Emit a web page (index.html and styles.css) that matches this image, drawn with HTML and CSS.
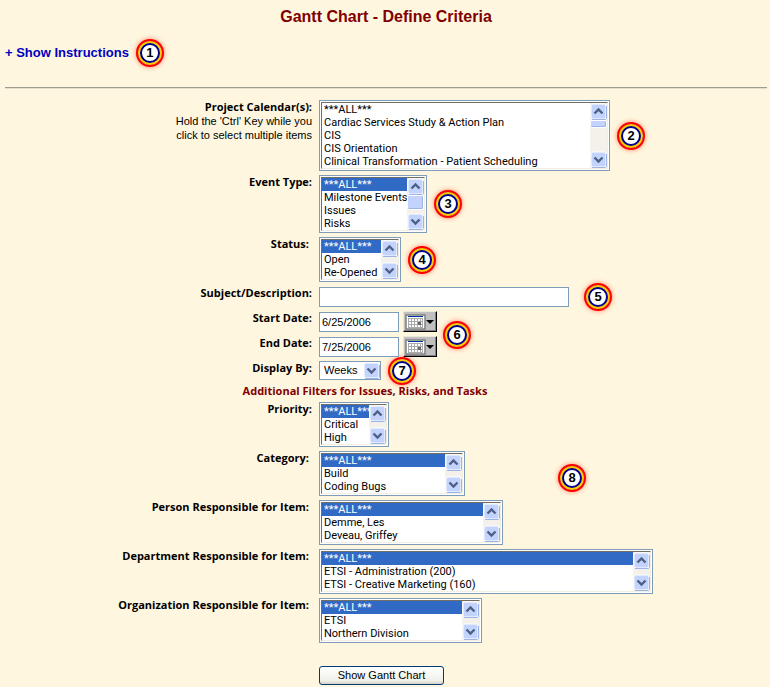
FILE: index.html
```html
<!DOCTYPE html>
<html lang="en">
  <head>
    <meta charset="utf-8">
    <title>Gantt Chart - Define Criteria</title>
    <link rel="stylesheet" href="styles.css">
  </head>
  <body>
    <svg class="defs" aria-hidden="true">
      <symbol id="up" viewBox="0 0 17 17">
        <rect x="1" y="1" width="15" height="15" rx="2" fill="#c3d3fd" stroke="#fff"/>
        <path d="M2 16.5h13.5l1-1V3" fill="none" stroke="#9db5e6"/>
        <path d="M4.500 10.500L8.500 6.500L12.500 10.500" fill="none" stroke="#4d6185" stroke-width="2.400"/>
      </symbol>
      <symbol id="down" viewBox="0 0 17 17">
        <rect x="1" y="1" width="15" height="15" rx="2" fill="#c3d3fd" stroke="#fff"/>
        <path d="M2 16.5h13.5l1-1V3" fill="none" stroke="#9db5e6"/>
        <path d="M4.500 6.500L8.500 10.500L12.500 6.500" fill="none" stroke="#4d6185" stroke-width="2.400"/>
      </symbol>
      <symbol id="calendar" viewBox="0 0 29 16">
        <rect x="1" y="1" width="19" height="14" fill="#fff" stroke="#808080" stroke-width="1.500"/>
        <path d="M3 2.500h15" stroke="#039"/>
        <path d="M3 4.500h15M3 7.500h15M3 10.500h15M3 13.500h15M3.500 4v10M6.500 4v10M9.500 4v10M12.500 4v10M15.500 4v10M17.500 4v10" stroke="#aaa" fill="none"/>
        <rect x="13" y="8" width="3" height="3" fill="#666"/>
        <path d="M21 6h8l-4 4z" fill="#000"/>
      </symbol>
    </svg>

    <h1>Gantt Chart - Define Criteria</h1>
    <div class="instructions">
      <a href="#instructions">+ Show Instructions</a>
      <span class="badge">1</span>
    </div>
    <hr>

    <form>
      <div class="row">
        <div class="label">
          <label for="calendars">Project Calendar(s):</label>
          <p>Hold the 'Ctrl' Key while you<br>click to select multiple items</p>
        </div>
        <div class="field">
          <div class="listbox calendars">
            <select id="calendars" multiple size="5">
              <option>***ALL***</option>
              <option>Cardiac Services Study &amp; Action Plan</option>
              <option>CIS</option>
              <option>CIS Orientation</option>
              <option>Clinical Transformation - Patient Scheduling</option>
            </select>
            <span class="scroll"><svg><use href="#up"/></svg><i class="thumb small"></i><svg><use href="#down"/></svg></span>
          </div>
          <span class="badge">2</span>
        </div>
      </div>

      <div class="row">
        <div class="label"><label for="type">Event Type:</label></div>
        <div class="field">
          <div class="listbox type">
            <select id="type" multiple size="4">
              <option selected>***ALL***</option>
              <option>Milestone Events</option>
              <option>Issues</option>
              <option>Risks</option>
            </select>
            <span class="scroll"><svg><use href="#up"/></svg><i class="thumb"></i><svg><use href="#down"/></svg></span>
          </div>
          <span class="badge">3</span>
        </div>
      </div>

      <div class="row">
        <div class="label"><label for="status">Status:</label>&nbsp;</div>
        <div class="field">
          <div class="listbox status">
            <select id="status" multiple size="3">
              <option selected>***ALL***</option>
              <option>Open</option>
              <option>Re-Opened</option>
            </select>
            <span class="scroll"><svg><use href="#up"/></svg><svg><use href="#down"/></svg></span>
          </div>
          <span class="badge">4</span>
        </div>
      </div>

      <div class="row line">
        <div class="label"><label for="subject">Subject/Description:</label></div>
        <div class="field wide">
          <input id="subject" class="subject" type="text">
          <span class="badge">5</span>
        </div>
      </div>

      <div class="dates">
        <div class="row line">
          <div class="label"><label for="start">Start Date:</label></div>
          <div class="field">
            <input id="start" class="date" type="text" value="6/25/2006">
            <button type="button" class="picker" aria-label="Pick start date"><svg><use href="#calendar"/></svg></button>
          </div>
        </div>
        <div class="row line">
          <div class="label"><label for="end">End Date:</label></div>
          <div class="field">
            <input id="end" class="date" type="text" value="7/25/2006">
            <button type="button" class="picker" aria-label="Pick end date"><svg><use href="#calendar"/></svg></button>
          </div>
        </div>
        <span class="badge">6</span>
      </div>

      <div class="row">
        <div class="label"><label for="display">Display By:</label></div>
        <div class="field">
          <div class="dropdown">
            <select id="display">
              <option>Weeks</option>
            </select>
            <svg><use href="#down"/></svg>
          </div>
          <span class="badge">7</span>
        </div>
      </div>

      <h2>Additional Filters for Issues, Risks, and Tasks</h2>

      <div class="filters">
        <div class="row">
          <div class="label"><label for="priority">Priority:</label></div>
          <div class="listbox priority">
            <select id="priority" multiple size="3">
              <option selected>***ALL***</option>
              <option>Critical</option>
              <option>High</option>
            </select>
            <span class="scroll"><svg><use href="#up"/></svg><svg><use href="#down"/></svg></span>
          </div>
        </div>
        <div class="row">
          <div class="label"><label for="category">Category:</label>&nbsp;</div>
          <div class="listbox category">
            <select id="category" multiple size="3">
              <option selected>***ALL***</option>
              <option>Build</option>
              <option>Coding Bugs</option>
            </select>
            <span class="scroll"><svg><use href="#up"/></svg><svg><use href="#down"/></svg></span>
          </div>
        </div>
        <div class="row">
          <div class="label"><label for="person">Person Responsible for Item:</label>&nbsp;</div>
          <div class="listbox person">
            <select id="person" multiple size="3">
              <option selected>***ALL***</option>
              <option>Demme, Les</option>
              <option>Deveau, Griffey</option>
            </select>
            <span class="scroll"><svg><use href="#up"/></svg><svg><use href="#down"/></svg></span>
          </div>
        </div>
        <div class="row">
          <div class="label"><label for="department">Department Responsible for Item:</label>&nbsp;</div>
          <div class="listbox department">
            <select id="department" multiple size="3">
              <option selected>***ALL***</option>
              <option>ETSI - Administration (200)</option>
              <option>ETSI - Creative Marketing (160)</option>
            </select>
            <span class="scroll"><svg><use href="#up"/></svg><svg><use href="#down"/></svg></span>
          </div>
        </div>
        <div class="row">
          <div class="label"><label for="organization">Organization Responsible for Item:</label>&nbsp;</div>
          <div class="listbox organization">
            <select id="organization" multiple size="3">
              <option selected>***ALL***</option>
              <option>ETSI</option>
              <option>Northern Division</option>
            </select>
            <span class="scroll"><svg><use href="#up"/></svg><svg><use href="#down"/></svg></span>
          </div>
        </div>
        <span class="badge">8</span>
      </div>

      <div class="row actions">
        <div></div>
        <div><button type="submit" class="submit">Show Gantt Chart</button></div>
      </div>
    </form>
  </body>
</html>
```

FILE: styles.css
```css
* {
  box-sizing: border-box;
}

body {
  margin: 8px 3px 0 5px;
  background-color: #fff6df;
  color: #000;
  font: 11px/14px "Liberation Sans", Arial, sans-serif;
}

.defs {
  display: none;
}

h1 {
  margin: 0;
  color: #800000;
  font-size: 16px;
  line-height: 18px;
  text-align: center;
}

.instructions {
  display: flex;
  align-items: center;
  gap: 7px;
  margin-top: 18px;
  font-size: 13px;
  line-height: 18px;
  font-weight: bold;
}

.instructions a {
  color: #0000c0;
  text-decoration: none;
}

hr {
  margin: 25px 0 11px;
  border: 0;
  border-top: 1px solid #9d9d90;
  border-bottom: 1px solid #e5dfcb;
}

form {
  max-width: 720px;
}

.row {
  display: grid;
  grid-template-columns: 307px 1fr;
  column-gap: 7px;
  margin-bottom: 4px;
}

.line {
  height: 21px;
}

.label {
  text-align: right;
}

label {
  font-family: "Open Sans", "Liberation Sans", sans-serif;
  font-weight: bold;
}

.label p {
  margin: 0;
}

.field {
  display: flex;
  align-items: center;
  gap: 7px;
}

.field.wide {
  gap: 15px;
}

select,
input,
button {
  margin: 0;
  font: 11px/13px "Liberation Sans", Arial, sans-serif;
  color: #000;
}

/* list boxes */
.listbox {
  position: relative;
  padding: 1px;
  background-color: #fff;
  border: 1px solid #7f9db9;
}

.listbox select {
  display: block;
  width: 100%;
  height: 100%;
  padding: 0;
  overflow: hidden;
  scrollbar-width: none;
  border: 1px solid;
  border-color: #716f64 #f1efe2 #f1efe2 #716f64;
  border-radius: 0;
  background-color: #fff;
  outline: 0;
  font-family: Roboto, "Liberation Sans", sans-serif;
}

.listbox option {
  height: 13px;
  min-height: 13px;
  padding: 0 2px;
  line-height: 13px;
}

.listbox option:checked {
  background: #316ac5 linear-gradient(#316ac5, #316ac5);
  color: #fff;
  -webkit-text-fill-color: #fff;
}

.calendars { width: 291px; height: 71px; }
.type { width: 108px; height: 58px; }
.status { width: 82px; height: 45px; }
.priority { width: 70px; height: 45px; }
.category { width: 146px; height: 45px; }
.person { width: 184px; height: 45px; }
.department { width: 334px; height: 45px; }
.organization { width: 163px; height: 45px; }

.scroll {
  position: absolute;
  top: 2px;
  right: 2px;
  bottom: 2px;
  display: flex;
  flex-direction: column;
  width: 17px;
  background-color: #f3f1ea;
  pointer-events: none;
}

.scroll svg {
  width: 17px;
  height: 17px;
}

.scroll svg:last-child {
  margin-top: auto;
}

.thumb {
  height: 15px;
  border: 1px solid #fff;
  border-radius: 2px;
  background-color: #c3d3fd;
  box-shadow: inset -1px -1px #9db5e6;
}

.thumb.small {
  height: 8px;
}

/* single line controls */
input {
  height: 20px;
  padding: 1px 2px;
  border: 1px solid #7f9db9;
  background-color: #fff;
}

.subject {
  width: 250px;
}

.date {
  width: 80px;
}

.picker {
  width: 34px;
  height: 21px;
  margin-left: -3px;
  padding: 1px;
  border: 1px solid;
  border-color: #ece9d8 #000 #000 #ece9d8;
  background-color: #c0c0c0;
  box-shadow: inset -1px -1px #808080;
}

.picker svg {
  display: block;
  width: 29px;
  height: 16px;
}

.dropdown {
  position: relative;
  width: 62px;
  height: 19px;
}

.dropdown select {
  appearance: none;
  width: 100%;
  height: 100%;
  padding: 0 4px;
  border: 1px solid #7f9db9;
  border-radius: 0;
  background-color: #fff;
}

.dropdown svg {
  position: absolute;
  top: 1px;
  right: 1px;
  width: 17px;
  height: 17px;
  pointer-events: none;
}

.dates,
.filters {
  position: relative;
}

h2 {
  margin: 0 0 4px;
  color: #800000;
  font: bold 11px/14px "Open Sans", "Liberation Sans", sans-serif;
  text-align: center;
}

.actions {
  margin-top: 23px;
}

.submit {
  width: 125px;
  height: 19px;
  padding: 0;
  border: 1px solid #003c74;
  border-radius: 3px;
  background: linear-gradient(#fff, #f0f0ea 80%, #d6d0c5);
}

/* numbered callouts */
.badge {
  flex: none;
  width: 28px;
  height: 28px;
  margin: -5px 0;
  border: 2px solid #f00;
  border-radius: 50%;
  background-color: #fff;
  box-shadow: inset 0 0 0 2px #fc0, inset 0 0 0 4px #000090, 0 0 5px #ff8866;
  font-size: 13px;
  font-weight: bold;
  line-height: 24px;
  text-align: center;
}

.dates .badge {
  position: absolute;
  top: 15px;
  left: 438px;
}

.filters .badge {
  position: absolute;
  top: 67px;
  left: 553px;
}
```
